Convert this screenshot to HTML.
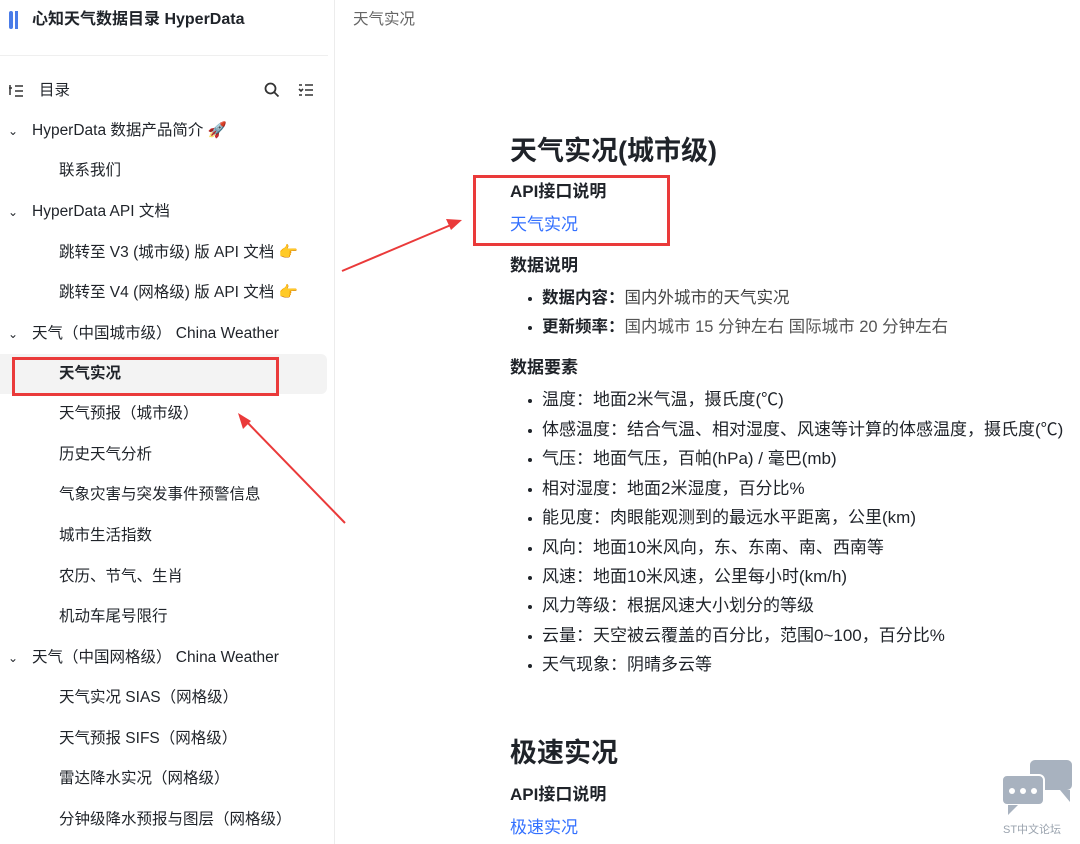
<!DOCTYPE html>
<html><head><meta charset="utf-8"><style>
*{margin:0;padding:0;box-sizing:border-box}
body{width:1080px;height:844px;overflow:hidden;background:#fff;font-family:"Liberation Sans","Noto Sans CJK SC",sans-serif;color:#1f2329;position:relative}
.sb{position:absolute;left:0;top:0;width:335px;height:844px;border-right:1px solid #ececec}
.t{position:absolute;font-size:15.5px;white-space:nowrap;line-height:20px}
.ab{position:absolute}
.li{position:absolute;left:527px;font-size:17px;white-space:nowrap;line-height:20px}
.li:before,.bl:before{content:"";position:absolute;left:1px;top:9px;width:4px;height:4px;border-radius:2px;background:#1f2329}
.li{padding-left:15px}
.bl{position:absolute;left:527px;padding-left:15px;font-size:16.5px;white-space:nowrap;line-height:20px}
</style></head><body>
<div class="sb">
<div class="ab" style="left:9px;top:11px;width:4px;height:18px;background:#4a7ce8;border-radius:2px"></div>
<div class="ab" style="left:15px;top:11px;width:3px;height:18px;background:#4a7ce8"></div>
<div class="t" style="left:32px;top:10px;font-weight:bold;font-size:16px">心知天气数据目录 HyperData</div>
<div class="ab" style="left:0;top:55px;width:328px;height:1px;background:#efefef"></div>
<svg class="ab" style="left:8px;top:84px" width="16" height="14"><path d="M2 1v10M1 4h3M7 2h8M7 7h8M7 12h8" stroke="#333" stroke-width="1.5" fill="none"/></svg>
<div class="t" style="left:39px;top:81px">目录</div>
<svg class="ab" style="left:264px;top:82px" width="16" height="16"><circle cx="6.5" cy="6.5" r="5" fill="none" stroke="#333" stroke-width="1.8"/><path d="M10 10l4.5 4.5" stroke="#333" stroke-width="1.8"/></svg>
<svg class="ab" style="left:298px;top:83px" width="16" height="14"><path d="M1 2h3M7 2h8M7 7h8M7 12h8M1 12h3M1 6l2 2 2-2" stroke="#333" stroke-width="1.6" fill="none"/></svg>
<div class="ab" style="left:0;top:354px;width:327px;height:40px;background:#f3f3f3;border-radius:0 6px 6px 0"></div>
<div class="ab" style="left:12px;top:357px;width:267px;height:39px;border:3px solid #ea3a3a"></div>
<div class="t" style="left:8px;top:121px;font-size:12px">⌄</div><div class="t" style="left:32px;top:121px">HyperData 数据产品简介 🚀</div>
<div class="t" style="left:59px;top:161px">联系我们</div>
<div class="t" style="left:8px;top:202px;font-size:12px">⌄</div><div class="t" style="left:32px;top:202px">HyperData API 文档</div>
<div class="t" style="left:59px;top:243px">跳转至 V3 (城市级) 版 API 文档 👉</div>
<div class="t" style="left:59px;top:283px">跳转至 V4 (网格级) 版 API 文档 👉</div>
<div class="t" style="left:8px;top:324px;font-size:12px">⌄</div><div class="t" style="left:32px;top:324px">天气（中国城市级） China Weather</div>
<div class="t" style="left:59px;top:364px;font-weight:bold">天气实况</div>
<div class="t" style="left:59px;top:404px">天气预报（城市级）</div>
<div class="t" style="left:59px;top:445px">历史天气分析</div>
<div class="t" style="left:59px;top:485px">气象灾害与突发事件预警信息</div>
<div class="t" style="left:59px;top:526px">城市生活指数</div>
<div class="t" style="left:59px;top:567px">农历、节气、生肖</div>
<div class="t" style="left:59px;top:607px">机动车尾号限行</div>
<div class="t" style="left:8px;top:648px;font-size:12px">⌄</div><div class="t" style="left:32px;top:648px">天气（中国网格级） China Weather</div>
<div class="t" style="left:59px;top:688px">天气实况 SIAS（网格级）</div>
<div class="t" style="left:59px;top:729px">天气预报 SIFS（网格级）</div>
<div class="t" style="left:59px;top:769px">雷达降水实况（网格级）</div>
<div class="t" style="left:59px;top:810px">分钟级降水预报与图层（网格级）</div>
</div>
<div class="t" style="left:353px;top:10px;color:#666">天气实况</div>
<div class="t" style="left:510px;top:134px;font-size:27px;font-weight:bold;line-height:34px">天气实况(城市级)</div>
<div class="ab" style="left:473px;top:175px;width:197px;height:71px;border:3px solid #ea3a3a"></div>
<div class="t" style="left:510px;top:182px;font-weight:bold;font-size:17px">API接口说明</div>
<div class="t" style="left:510px;top:215px;color:#3370ff;font-size:17px">天气实况</div>
<div class="t" style="left:510px;top:256px;font-weight:bold;font-size:17px">数据说明</div>
<div class="bl" style="top:288px"><b>数据内容：</b><span style="color:#444">国内外城市的天气实况</span></div>
<div class="bl" style="top:317px"><b>更新频率：</b><span style="color:#555">国内城市 15 分钟左右 国际城市 20 分钟左右</span></div>
<div class="t" style="left:510px;top:358px;font-weight:bold;font-size:17px">数据要素</div>
<div class="li" style="top:390px">温度：地面2米气温，摄氏度(℃)</div>
<div class="li" style="top:420px">体感温度：结合气温、相对湿度、风速等计算的体感温度，摄氏度(℃)</div>
<div class="li" style="top:449px">气压：地面气压，百帕(hPa) / 毫巴(mb)</div>
<div class="li" style="top:479px">相对湿度：地面2米湿度，百分比%</div>
<div class="li" style="top:508px">能见度：肉眼能观测到的最远水平距离，公里(km)</div>
<div class="li" style="top:538px">风向：地面10米风向，东、东南、南、西南等</div>
<div class="li" style="top:567px">风速：地面10米风速，公里每小时(km/h)</div>
<div class="li" style="top:596px">风力等级：根据风速大小划分的等级</div>
<div class="li" style="top:626px">云量：天空被云覆盖的百分比，范围0~100，百分比%</div>
<div class="li" style="top:655px">天气现象：阴晴多云等</div>
<div class="t" style="left:510px;top:736px;font-size:27px;font-weight:bold;line-height:34px">极速实况</div>
<div class="t" style="left:510px;top:785px;font-weight:bold;font-size:17px">API接口说明</div>
<div class="t" style="left:510px;top:818px;color:#3370ff;font-size:17px">极速实况</div>
<svg class="ab" style="left:0;top:0" width="1080" height="844">
<path d="M342 271L458 222" stroke="#ea3a3a" stroke-width="2"/><path d="M462 220l-16 -1 5 11z" fill="#ea3a3a"/>
<path d="M345 523L245 420" stroke="#ea3a3a" stroke-width="2"/><path d="M238 413l5 16 8-8z" fill="#ea3a3a"/>
<rect x="1030" y="760" width="42" height="30" rx="5" fill="#a8b2bf"/><path d="M1060 790l10 12v-12z" fill="#a8b2bf"/>
<rect x="1002" y="775" width="42" height="30" rx="5" fill="#a8b2bf" stroke="#fff" stroke-width="2"/><path d="M1008 805v10l10-10z" fill="#a8b2bf"/>
<circle cx="1012" cy="791" r="3" fill="#fff"/><circle cx="1023" cy="791" r="3" fill="#fff"/><circle cx="1034" cy="791" r="3" fill="#fff"/>
<text x="1003" y="833" font-size="11" fill="#9aa3ae" font-family="Liberation Sans,Noto Sans CJK SC,sans-serif">ST中文论坛</text>
</svg>
</body></html>
